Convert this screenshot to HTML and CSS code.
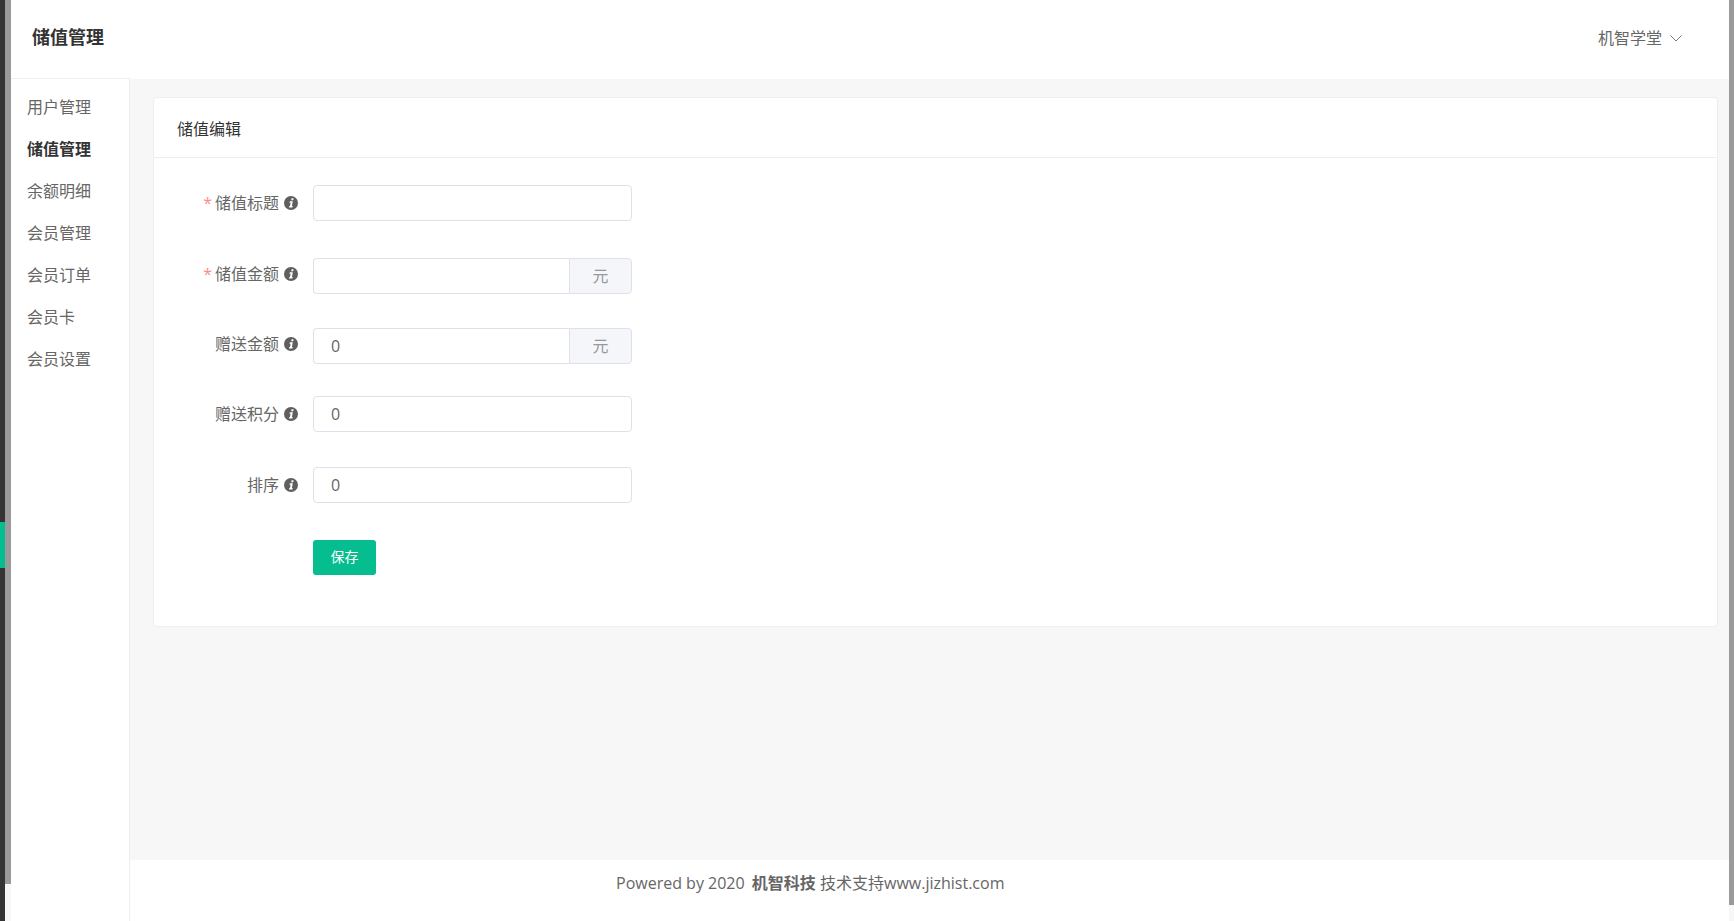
FILE: index.html
```html
<!DOCTYPE html>
<html lang="zh-CN">
<head>
<meta charset="utf-8">
<title>储值管理</title>
<link rel="stylesheet" href="styles.css">
</head>
<body>
<svg class="defs" width="0" height="0"><symbol id="i-info" viewBox="0 0 14 14"><circle cx="7" cy="7" r="7" fill="#5f5f5f"/><path d="M7.6 2.3h2l-.4 1.9h-2zM5.800 5.200h3L7.900 10h.8l-.3 1.500H5l.3-1.500h.7l.6-3.300H5.500z" fill="#fff"/></symbol></svg>
<div class="strip-dark"><span class="strip-mark"></span></div>
<div class="strip-gray strip-gray-left"></div>
<div class="app">
  <header class="topbar">
    <h1 class="page-title">储值管理</h1>
    <div class="user">
      <span>机智学堂</span>
      <svg class="chevron" viewBox="0 0 12 7" width="12" height="7"><path d="M.5.5 6 6 11.5.5" fill="none" stroke="#777" stroke-width="1"/></svg>
    </div>
  </header>
  <div class="body-row">
    <nav class="sidebar">
      <a class="nav-item">用户管理</a>
      <a class="nav-item active">储值管理</a>
      <a class="nav-item">余额明细</a>
      <a class="nav-item">会员管理</a>
      <a class="nav-item">会员订单</a>
      <a class="nav-item">会员卡</a>
      <a class="nav-item">会员设置</a>
    </nav>
    <div class="content">
      <main class="main">
        <section class="card">
          <div class="card-header">储值编辑</div>
          <form class="form">
            <div class="row">
              <label class="label"><span class="req">*</span><span class="label-text">储值标题</span><svg class="info"><use href="#i-info"/></svg></label>
              <div class="field"><input class="input" type="text"></div>
            </div>
            <div class="row row-addon">
              <label class="label"><span class="req">*</span><span class="label-text">储值金额</span><svg class="info"><use href="#i-info"/></svg></label>
              <div class="field"><input class="input input-join" type="text"><span class="addon">元</span></div>
            </div>
            <div class="row row-addon">
              <label class="label"><span class="label-text">赠送金额</span><svg class="info"><use href="#i-info"/></svg></label>
              <div class="field"><input class="input input-join" type="text" value="0"><span class="addon">元</span></div>
            </div>
            <div class="row">
              <label class="label"><span class="label-text">赠送积分</span><svg class="info"><use href="#i-info"/></svg></label>
              <div class="field"><input class="input" type="text" value="0"></div>
            </div>
            <div class="row">
              <label class="label"><span class="label-text">排序</span><svg class="info"><use href="#i-info"/></svg></label>
              <div class="field"><input class="input" type="text" value="0"></div>
            </div>
            <div class="row">
              <span class="label"></span>
              <button class="btn" type="button">保存</button>
            </div>
          </form>
        </section>
      </main>
      <footer class="footer">Powered by 2020 <strong>机智科技</strong> 技术支持www.jizhist.com</footer>
    </div>
  </div>
</div>
<div class="strip-gray strip-gray-right"></div>
</body>
</html>
```

FILE: styles.css
```css
* { box-sizing: border-box; }
html, body { height: 100%; }
body {
  margin: 0;
  display: flex;
  height: 921px;
  overflow: hidden;
  background: #f7f7f7;
  color: #666;
  font-family: "Open Sans", "Noto Sans CJK SC", sans-serif;
  font-size: 16px;
}
.defs { position: absolute; }
.strip-dark {
  position: relative;
  flex: 0 0 5px;
  background: #353432;
}
.strip-mark {
  position: absolute;
  left: 0;
  top: 522px;
  width: 5px;
  height: 46px;
  background: #05bd8e;
}
.strip-gray { flex: none; background: #9a9a9a; }
.strip-gray-left { width: 6px; height: 884px; }
.strip-gray-right { width: 5px; height: 905px; }
.app {
  flex: 1;
  min-width: 0;
  display: flex;
  flex-direction: column;
  background: #fff;
}
.topbar {
  flex: 0 0 78px;
  display: flex;
  align-items: center;
  justify-content: space-between;
  padding: 0 47px 4px 21px;
}
.page-title {
  margin: 0;
  color: #333;
  font-size: 18px;
  font-weight: 700;
  line-height: 26px;
}
.user {
  display: flex;
  align-items: center;
  gap: 8px;
  line-height: 24px;
  padding-top: 2px;
}
.body-row { flex: 1; display: flex; min-height: 0; }
.sidebar {
  flex: 0 0 119px;
  display: flex;
  flex-direction: column;
  padding-top: 7px;
  border-top: 1px solid #eee;
  border-right: 1px solid #eee;
}
.nav-item {
  height: 42px;
  line-height: 42px;
  padding-left: 16px;
  color: #666;
}
.nav-item.active { color: #333; font-weight: 700; }
.content {
  flex: 1;
  min-width: 0;
  display: flex;
  flex-direction: column;
  border-top: 1px solid #fff;
}
.main {
  flex: 0 0 781px;
  padding: 18px 11px 0 23px;
  background: #f7f7f7;
}
.card {
  height: 530px;
  background: #fff;
  border: 1px solid #eeeef2;
  border-radius: 4px;
}
.card-header {
  height: 60px;
  line-height: 63px;
  padding-left: 23px;
  color: #333;
  border-bottom: 1px solid #eeeef2;
}
.form {
  display: grid;
  grid-template-rows: 73px 70px 68px 71px 73px 35px;
  padding-top: 27px;
}
.row {
  display: flex;
  align-items: flex-start;
}
.label {
  flex: 0 0 159px;
  height: 36px;
  display: flex;
  align-items: center;
  justify-content: flex-end;
  padding-right: 15px;
  line-height: 24px;
  color: #666;
}
.row-addon .label { padding-bottom: 4px; }
.req { margin-right: 3px; color: #ff8a8a; }
.info { flex: none; width: 14px; height: 14px; margin-left: 5px; }
.field { display: flex; width: 319px; height: 36px; }
.input {
  flex: 1;
  min-width: 0;
  height: 36px;
  padding: 0 17px;
  border: 1px solid #e0e0ea;
  border-radius: 4px;
  background: #fff;
  color: #666;
  font: inherit;
  outline: none;
}
.input-join { border-right: 0; border-radius: 4px 0 0 4px; }
.addon {
  flex: 0 0 63px;
  line-height: 34px;
  text-align: center;
  color: #999;
  background: #f5f6fa;
  border: 1px solid #e0e0ea;
  border-radius: 0 4px 4px 0;
}
.btn {
  width: 63px;
  height: 35px;
  padding: 0 0 3px;
  border: 0;
  border-radius: 3px;
  background: #05bd8e;
  color: #fff;
  font: inherit;
  font-size: 14px;
}
.footer {
  flex: 1;
  padding: 8px 0 0 486px;
  line-height: 30px;
  color: #666;
  background: #fff;
}
.footer strong { margin-left: 3px; font-weight: 700; }
```
